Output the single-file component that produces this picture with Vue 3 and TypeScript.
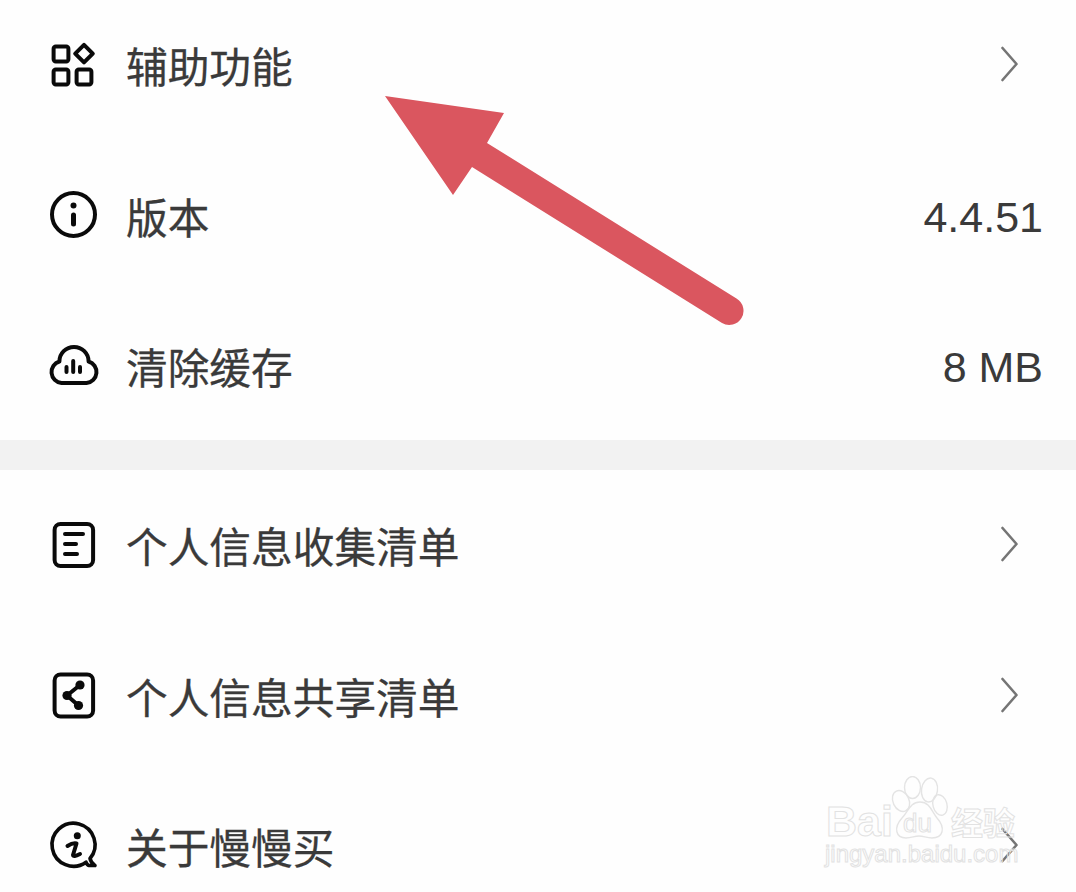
<script setup lang="ts">
interface Row {
  label: string
  icon: string
  value?: string
}
const groupOne: Row[] = [
  { label: '辅助功能', icon: 'grid' },
  { label: '版本', icon: 'info', value: '4.4.51' },
  { label: '清除缓存', icon: 'cloud', value: '8 MB' },
]
const groupTwo: Row[] = [
  { label: '个人信息收集清单', icon: 'doc' },
  { label: '个人信息共享清单', icon: 'share' },
  { label: '关于慢慢买', icon: 'about' },
]
const groups = [groupOne, groupTwo]
</script>

<template>
  <div class="page">
    <template v-for="(group, g) in groups" :key="g">
      <div v-if="g > 0" class="divider"></div>
      <section class="group" :class="g === 0 ? 'first' : 'second'">
        <div v-for="row in group" :key="row.label" class="row">
          <svg class="icon" viewBox="0 0 48 48" fill="none" stroke="#0a0a0a" stroke-width="4" stroke-linejoin="round" stroke-linecap="round">
            <template v-if="row.icon === 'grid'">
              <rect x="4.6" y="3.6" width="14.8" height="14.8" rx="2.2" />
              <rect x="4.6" y="26.6" width="14.8" height="14.8" rx="2.2" />
              <rect x="27.6" y="26.6" width="14.8" height="14.8" rx="2.2" />
              <path d="M35 1.8 L43.8 10.6 L35 19.4 L26.2 10.6 Z" />
            </template>
            <template v-else-if="row.icon === 'info'">
              <circle cx="24.5" cy="20.5" r="21.5" />
              <circle cx="24.5" cy="11.5" r="3" fill="#0a0a0a" stroke="none" />
              <path d="M24.5 21 V30" stroke-width="5" />
            </template>
            <template v-else-if="row.icon === 'cloud'">
              <path d="M12.5 39 H37.5 A11 11 0 0 0 39.6 17.5 A14.6 14.6 0 0 0 10.4 17.5 A11 11 0 0 0 12.5 39 Z" />
              <path d="M17.5 23 V28 M24.2 17 V28 M31 23 V28" />
            </template>
            <template v-else-if="row.icon === 'doc'">
              <rect x="5.6" y="1" width="38.5" height="42" rx="6" />
              <path d="M16 11 H34 M16 21 H27 M16 31 H28" />
            </template>
            <template v-else-if="row.icon === 'share'">
              <rect x="5.6" y="0.5" width="38.5" height="42" rx="6" />
              <path d="M31 11 L18 21.5 L29.5 31.5" />
              <circle cx="31" cy="11" r="4.6" fill="#0a0a0a" stroke="none" />
              <circle cx="18" cy="21.5" r="4.6" fill="#0a0a0a" stroke="none" />
              <circle cx="29.5" cy="31.5" r="4.6" fill="#0a0a0a" stroke="none" />
            </template>
            <template v-else>
              <path d="M37 38.2 A21.5 21.5 0 1 1 41 34.5 Q42 39 46 41.5 H40 Q38 41 37 38.2 Z" stroke-width="3.6" />
              <circle cx="28.3" cy="11.7" r="3.5" fill="#0a0a0a" stroke="none" />
              <path d="M18.5 22 Q24 18.5 27.5 19.5 L24 31 Q24 33.5 31 30" />
            </template>
          </svg>
          <span class="label">{{ row.label }}</span>
          <span v-if="row.value" class="value">{{ row.value }}</span>
          <svg v-else class="chev" viewBox="0 0 18 36" fill="none" stroke="#757575" stroke-width="2.6" stroke-linecap="round" stroke-linejoin="round">
            <path d="M2.5 2 L16.5 18 L2.5 34" />
          </svg>
        </div>
      </section>
    </template>

    <svg class="arrow" viewBox="0 0 1076 892" aria-hidden="true">
      <path d="M385 96 L504 113 L487 143 L736.5 298.5 A14 14 0 0 1 722 323 L472 167 L453 195 Z" fill="#da565f" />
    </svg>

    <div class="mark" aria-hidden="true">
      <svg class="paw" viewBox="0 0 70 70" fill="none" stroke="#e4e4e4" stroke-width="1.4">
        <ellipse cx="11" cy="25" rx="8" ry="11" transform="rotate(-25 11 25)" />
        <ellipse cx="22.5" cy="11.5" rx="8" ry="11" />
        <ellipse cx="39.5" cy="14" rx="8" ry="12" transform="rotate(8 39.5 14)" />
        <ellipse cx="50" cy="29" rx="7" ry="10.5" transform="rotate(-15 50 29)" />
        <path d="M30 26 C40 26 42 36 47 42 C56 52 53 62 42 62 C36 62 34 60 29 60 C24 60 22 62 16 62 C6 62 3 52 12 42 C18 36 20 26 30 26 Z" />
      </svg>
      <div class="mark-top">
        <span class="bai">Bai</span>
        <span class="du">du</span>
        <span class="cn">经验</span>
      </div>
      <div class="mark-url">jingyan.baidu.com</div>
    </div>
  </div>
</template>

<style>
html, body { margin: 0; background: #fff; }
</style>

<style scoped>
.page {
  position: relative;
  width: 1076px;
  height: 892px;
  overflow: hidden;
  background: #fefefe;
  font-family: "Liberation Sans", "Noto Sans CJK SC", sans-serif;
  color: #3a3a3a;
}
.group {
  display: flex;
  flex-direction: column;
  gap: 6.5px;
}
.first { margin-top: -5px; }
.second { padding-top: 5px; }
.row {
  display: flex;
  align-items: center;
  height: 144px;
  padding: 0 33px 0 49px;
}
.icon {
  flex: none;
  width: 48px;
  height: 48px;
  overflow: visible;
}
.label {
  margin: 0 0 4px 29px;
  font-size: 41.7px;
  flex: 1;
  line-height: 48px;
  font-family: "Noto Sans CJK SC", sans-serif;
  -webkit-text-stroke: 0.3px #3a3a3a;
}
.value {
  font-size: 43px;
  line-height: 48px;
  margin-bottom: 2px;
}
.chev {
  flex: none;
  width: 18px;
  height: 36px;
  margin: 0 25px 6px 0;
}
.divider {
  height: 30px;
  background: #f2f2f2;
}
.arrow {
  position: absolute;
  inset: 0;
  width: 1076px;
  height: 892px;
}
.mark {
  position: absolute;
  left: 825px;
  top: 776px;
  width: 200px;
  height: 100px;
  color: transparent;
  -webkit-text-stroke: 1px #e2e2e2;
}
.paw {
  position: absolute;
  left: 65px;
  top: 0;
  width: 70px;
  height: 70px;
}
.mark-top {
  position: absolute;
  left: 0;
  top: 22px;
  width: 200px;
}
.bai {
  position: absolute;
  left: 1px;
  top: 5px;
  font-size: 43px;
  line-height: 36px;
  font-weight: 700;
}
.du {
  position: absolute;
  left: 78px;
  top: 12px;
  font-size: 26px;
  line-height: 26px;
}
.cn {
  position: absolute;
  left: 126px;
  top: 7px;
  font-size: 32px;
  line-height: 32px;
  font-weight: 700;
  font-family: "Noto Sans CJK SC", sans-serif;
}
.mark-url {
  position: absolute;
  left: 0;
  top: 66px;
  font-size: 24px;
  line-height: 24px;
  white-space: nowrap;
}
</style>
